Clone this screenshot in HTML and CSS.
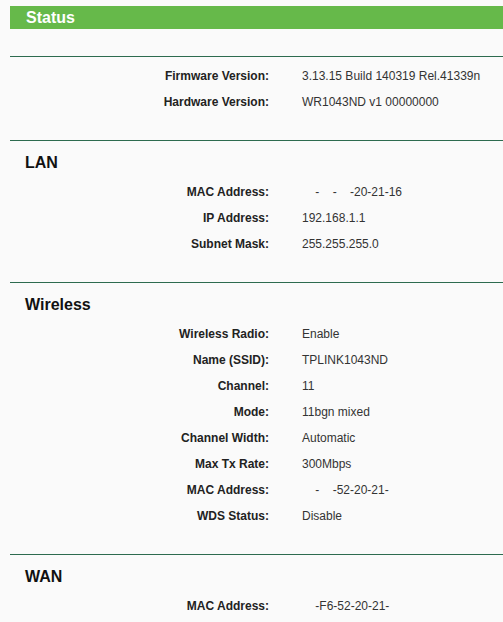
FILE: index.html
```html
<!DOCTYPE html>
<html>
<head>
<meta charset="utf-8">
<title>Status</title>
<link rel="stylesheet" href="styles.css">
</head>
<body>
<div class="page">
  <div class="title-bar">Status</div>

  <div class="section first">
    <div class="row"><span class="label">Firmware Version:</span><span class="value">3.13.15 Build 140319 Rel.41339n</span></div>
    <div class="row"><span class="label">Hardware Version:</span><span class="value">WR1043ND v1 00000000</span></div>
  </div>

  <div class="section">
    <h2 class="heading">LAN</h2>
    <div class="row"><span class="label">MAC Address:</span><span class="value">    -    -    -20-21-16</span></div>
    <div class="row"><span class="label">IP Address:</span><span class="value">192.168.1.1</span></div>
    <div class="row"><span class="label">Subnet Mask:</span><span class="value">255.255.255.0</span></div>
  </div>

  <div class="section">
    <h2 class="heading">Wireless</h2>
    <div class="row"><span class="label">Wireless Radio:</span><span class="value">Enable</span></div>
    <div class="row"><span class="label">Name (SSID):</span><span class="value">TPLINK1043ND</span></div>
    <div class="row"><span class="label">Channel:</span><span class="value">11</span></div>
    <div class="row"><span class="label">Mode:</span><span class="value">11bgn mixed</span></div>
    <div class="row"><span class="label">Channel Width:</span><span class="value">Automatic</span></div>
    <div class="row"><span class="label">Max Tx Rate:</span><span class="value">300Mbps</span></div>
    <div class="row"><span class="label">MAC Address:</span><span class="value">    -    -52-20-21-</span></div>
    <div class="row"><span class="label">WDS Status:</span><span class="value">Disable</span></div>
  </div>

  <div class="section">
    <h2 class="heading">WAN</h2>
    <div class="row"><span class="label">MAC Address:</span><span class="value">    -F6-52-20-21-</span></div>
  </div>
</div>
</body>
</html>
```

FILE: styles.css
```css
html, body {
  margin: 0;
  padding: 0;
  background: #fafafa;
  font-family: "Liberation Sans", Arial, sans-serif;
  color: #333;
}

.page {
  padding: 6px 0 0 10px;
}

.title-bar {
  height: 23px;
  line-height: 23px;
  background: #66b94a;
  color: #fff;
  font-size: 16px;
  font-weight: bold;
  padding-left: 16px;
}

.section {
  border-top: 1px solid #2d6b4f;
  padding: 9px 0 25px 0;
}

.section.first {
  margin-top: 27px;
  padding-top: 6px;
}

.heading {
  margin: 0 0 3px 0;
  padding-left: 15px;
  font-size: 16px;
  line-height: 26px;
  font-weight: bold;
  color: #111;
}

.row {
  display: grid;
  grid-template-columns: 259px 1fr;
  column-gap: 33px;
  height: 26px;
  line-height: 26px;
  font-size: 12px;
}

.label {
  text-align: right;
  font-weight: bold;
  color: #222;
}

.value {
  white-space: pre;
  color: #333;
}
```
